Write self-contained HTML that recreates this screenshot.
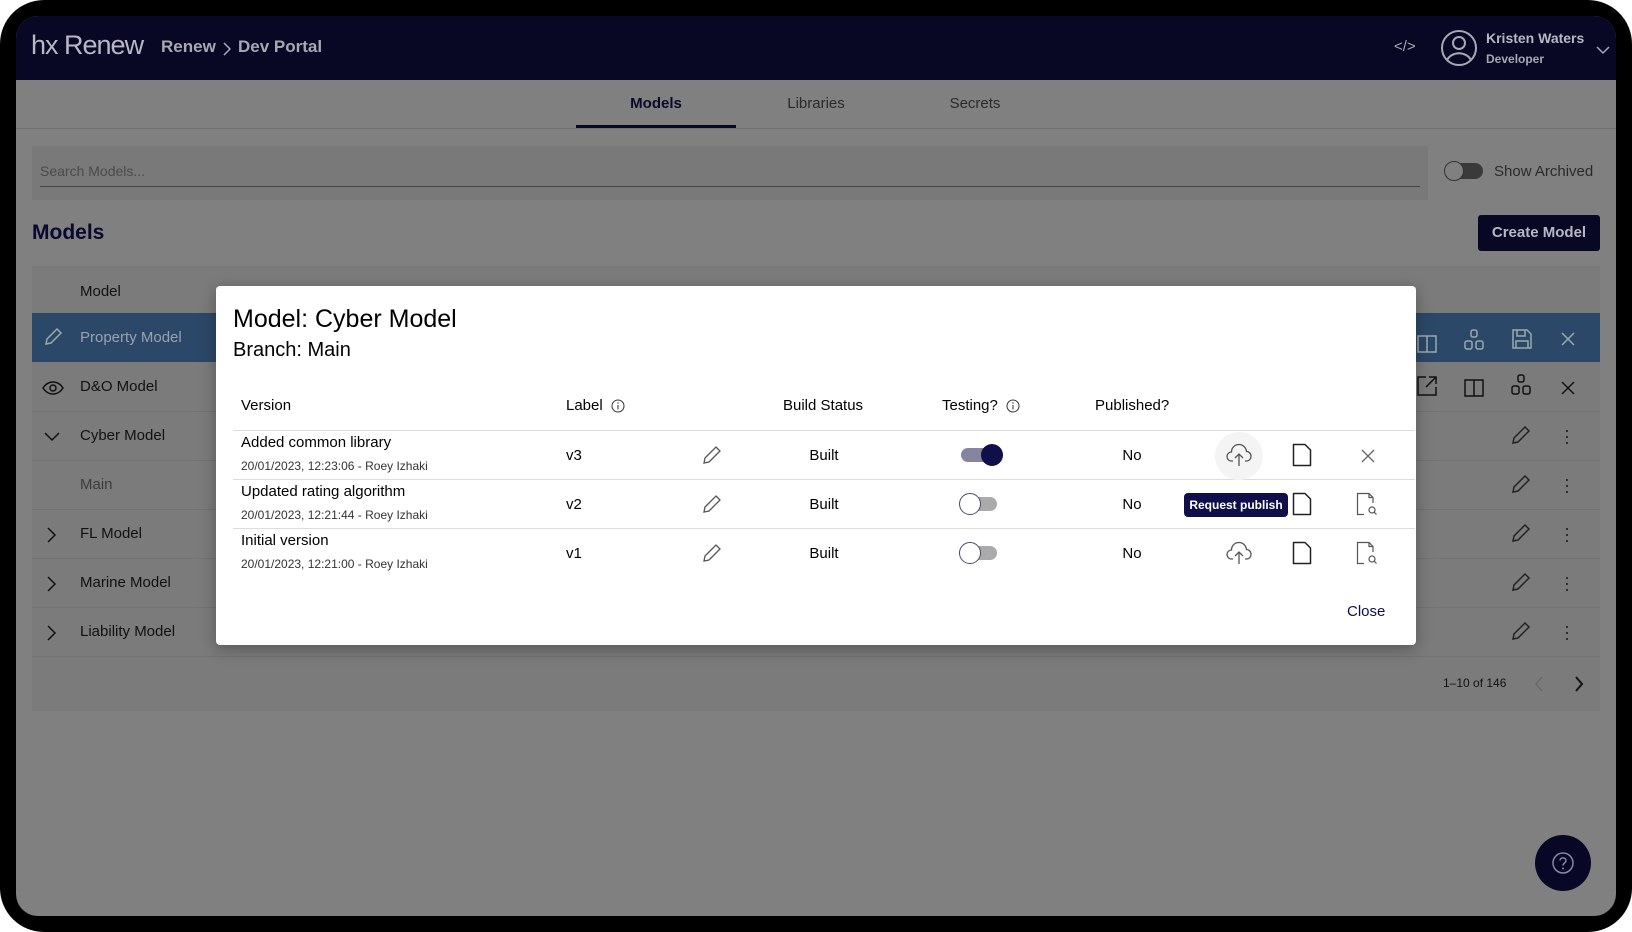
<!DOCTYPE html>
<html><head><meta charset="utf-8"><style>
*{margin:0;padding:0;box-sizing:border-box}
body{width:1632px;height:932px;background:#fff;font-family:"Liberation Sans",sans-serif;position:relative;overflow:hidden}
.a{position:absolute}
.frame{left:0;top:0;width:1632px;height:932px;background:#000;border-radius:44px}
.screen{left:16px;top:16px;width:1600px;height:900px;background:#808080;border-radius:22px;overflow:hidden}
.t{position:absolute;white-space:nowrap}
svg{position:absolute;overflow:visible}
.bt{color:#111;font-size:15px}
.rowline{position:absolute;left:16px;width:1568px;height:1px;background:#737373}
.mt{color:#000}
</style></head><body>
<div class="a frame"></div>
<div class="a screen">
 <div class="a" style="left:0;top:0;width:1600px;height:64px;background:#080824"></div>
 <div class="t" style="left:15px;top:14px;font-size:27px;color:#b8b8c4;letter-spacing:-1px">hx Renew</div>
 <div class="t" style="left:145px;top:21px;font-size:17px;color:#a8a8b4;font-weight:bold">Renew</div>
 <svg style="left:206px;top:25px" width="10" height="16"><path d="M2 2 L8 8 L2 14" stroke="#a8a8b4" stroke-width="1.5" fill="none"/></svg>
 <div class="t" style="left:222px;top:21px;font-size:17px;color:#a8a8b4;font-weight:bold">Dev Portal</div>
 <div class="t" style="left:1378px;top:22px;font-size:15px;color:#a8a8b4">&lt;/&gt;</div>
 <svg style="left:1424px;top:13px" width="38" height="38"><circle cx="19" cy="19" r="17" stroke="#a8a8b4" stroke-width="2" fill="none"/><circle cx="19" cy="14" r="6" stroke="#a8a8b4" stroke-width="2" fill="none"/><path d="M7 31 C12 22 26 22 31 31" stroke="#a8a8b4" stroke-width="2" fill="none"/></svg>
 <div class="t" style="left:1470px;top:14px;font-size:14px;color:#b8b8c4;font-weight:bold">Kristen Waters</div>
 <div class="t" style="left:1470px;top:36px;font-size:12px;color:#a8a8b4;font-weight:bold">Developer</div>
 <svg style="left:1580px;top:30px" width="14" height="9"><path d="M1 1 L7 7 L13 1" stroke="#a8a8b4" stroke-width="1.5" fill="none"/></svg>
 <div class="t" style="left:560px;top:79px;width:160px;text-align:center;font-size:15px;color:#0a0a2a;font-weight:bold">Models</div>
 <div class="t" style="left:720px;top:79px;width:160px;text-align:center;font-size:15px;color:#2a2a2a">Libraries</div>
 <div class="t" style="left:879px;top:79px;width:160px;text-align:center;font-size:15px;color:#2a2a2a">Secrets</div>
 <div class="a" style="left:0;top:112px;width:1600px;height:1px;background:#707070"></div>
 <div class="a" style="left:560px;top:109px;width:160px;height:3px;background:#080824"></div>
 <div class="a" style="left:16px;top:130px;width:1396px;height:54px;background:#797979"></div>
 <div class="t" style="left:24px;top:147px;font-size:14px;color:#4a4a4a">Search Models...</div>
 <div class="a" style="left:24px;top:170px;width:1380px;height:1px;background:#444"></div>
 <div class="a" style="left:1429px;top:147px;width:38px;height:16px;border-radius:8px;background:#3a3a3a"></div>
 <div class="a" style="left:1428px;top:145px;width:20px;height:20px;border-radius:10px;background:#808080;border:1px solid #333"></div>
 <div class="t" style="left:1478px;top:147px;font-size:15px;color:#2a2a2a">Show Archived</div>
 <div class="t" style="left:16px;top:205px;font-size:21px;color:#080830;font-weight:bold">Models</div>
 <div class="a" style="left:1462px;top:199px;width:122px;height:36px;background:#080824;border-radius:3px"></div>
 <div class="t" style="left:1462px;top:208px;width:122px;text-align:center;font-size:15px;color:#b8b8c4;font-weight:bold">Create Model</div>
 <div class="a" style="left:16px;top:250px;width:1568px;height:445px;background:#7b7b7b"></div>
 <div class="t bt" style="left:64px;top:267px">Model</div>
 <div class="a" style="left:16px;top:297px;width:1568px;height:49px;background:#2c4868"></div>
 <svg style="left:26px;top:310px" width="22" height="22"><path d="M4 18 L5 13 L15 3 L19 7 L9 17 Z" stroke="#9aa" stroke-width="1.5" fill="none"/></svg>
 <div class="t" style="left:64px;top:313px;font-size:15px;color:#9aa2ad">Property Model</div>
 <div class="t bt" style="left:64px;top:362px">D&amp;O Model</div>
 <svg style="left:26px;top:364px" width="22" height="16"><path d="M1 8 C6 0 16 0 21 8 C16 16 6 16 1 8Z" stroke="#111" stroke-width="1.5" fill="none"/><circle cx="11" cy="8" r="3" stroke="#111" stroke-width="1.5" fill="none"/></svg>
 <div class="rowline" style="top:395px"></div>
 <svg style="left:28px;top:416px" width="16" height="10"><path d="M1 1 L8 8 L15 1" stroke="#111" stroke-width="1.5" fill="none"/></svg>
 <div class="t bt" style="left:64px;top:411px">Cyber Model</div>
 <div class="rowline" style="top:444px"></div>
 <div class="t" style="left:64px;top:460px;font-size:15px;color:#3c3c3c">Main</div>
 <div class="rowline" style="top:493px"></div>
 <svg style="left:31px;top:511px" width="10" height="16"><path d="M1 1 L8 8 L1 15" stroke="#111" stroke-width="1.5" fill="none"/></svg>
 <div class="t bt" style="left:64px;top:509px">FL Model</div>
 <div class="rowline" style="top:542px"></div>
 <svg style="left:31px;top:560px" width="10" height="16"><path d="M1 1 L8 8 L1 15" stroke="#111" stroke-width="1.5" fill="none"/></svg>
 <div class="t bt" style="left:64px;top:558px">Marine Model</div>
 <div class="rowline" style="top:591px"></div>
 <svg style="left:31px;top:609px" width="10" height="16"><path d="M1 1 L8 8 L1 15" stroke="#111" stroke-width="1.5" fill="none"/></svg>
 <div class="t bt" style="left:64px;top:607px">Liability Model</div>
 <div class="rowline" style="top:640px"></div>
 <svg style="left:1400px;top:318px" width="24" height="20"><path d="M2 2 H11 V18 H2Z M11 2 H20 V18 H11" stroke="#9aa" stroke-width="1.5" fill="none"/></svg>
 <svg style="left:1447px;top:312px" width="24" height="24"><rect x="8" y="2" width="6" height="7" rx="2" stroke="#9aa" stroke-width="1.5" fill="none"/><rect x="2" y="13" width="7" height="8" rx="2" stroke="#9aa" stroke-width="1.5" fill="none"/><rect x="13" y="13" width="7" height="8" rx="2" stroke="#9aa" stroke-width="1.5" fill="none"/></svg>
 <svg style="left:1495px;top:312px" width="22" height="22"><path d="M2 2 H16 L20 6 V20 H2Z M6 2 V8 H14 V2 M5 20 V13 H17 V20" stroke="#9aa" stroke-width="1.5" fill="none"/></svg>
 <svg style="left:1545px;top:316px" width="14" height="14"><path d="M1 1 L13 13 M13 1 L1 13" stroke="#9aa" stroke-width="1.5"/></svg>
 <svg style="left:1400px;top:359px" width="22" height="22"><path d="M10 2 H2 V20 H20 V12 M13 2 H20 V9 M20 2 L10 12" stroke="#111" stroke-width="1.5" fill="none"/></svg>
 <svg style="left:1447px;top:362px" width="24" height="20"><path d="M2 2 H11 V18 H2Z M11 2 H20 V18 H11" stroke="#111" stroke-width="1.5" fill="none"/></svg>
 <svg style="left:1494px;top:357px" width="24" height="24"><rect x="8" y="2" width="6" height="7" rx="2" stroke="#111" stroke-width="1.5" fill="none"/><rect x="2" y="13" width="7" height="8" rx="2" stroke="#111" stroke-width="1.5" fill="none"/><rect x="13" y="13" width="7" height="8" rx="2" stroke="#111" stroke-width="1.5" fill="none"/></svg>
 <svg style="left:1545px;top:365px" width="14" height="14"><path d="M1 1 L13 13 M13 1 L1 13" stroke="#111" stroke-width="1.5"/></svg>
 <svg style="left:1494px;top:408px" width="22" height="22"><path d="M3 19 L4 14 L15 3 L19 7 L8 18 Z" stroke="#222" stroke-width="1.5" fill="none"/></svg>
 <div class="t" style="left:1548px;top:411px;font-size:18px;color:#222;line-height:6px;width:4px">·<br>·<br>·</div>
 <svg style="left:1494px;top:457px" width="22" height="22"><path d="M3 19 L4 14 L15 3 L19 7 L8 18 Z" stroke="#222" stroke-width="1.5" fill="none"/></svg>
 <div class="t" style="left:1548px;top:460px;font-size:18px;color:#222;line-height:6px">·<br>·<br>·</div>
 <svg style="left:1494px;top:506px" width="22" height="22"><path d="M3 19 L4 14 L15 3 L19 7 L8 18 Z" stroke="#222" stroke-width="1.5" fill="none"/></svg>
 <div class="t" style="left:1548px;top:509px;font-size:18px;color:#222;line-height:6px">·<br>·<br>·</div>
 <svg style="left:1494px;top:555px" width="22" height="22"><path d="M3 19 L4 14 L15 3 L19 7 L8 18 Z" stroke="#222" stroke-width="1.5" fill="none"/></svg>
 <div class="t" style="left:1548px;top:558px;font-size:18px;color:#222;line-height:6px">·<br>·<br>·</div>
 <svg style="left:1494px;top:604px" width="22" height="22"><path d="M3 19 L4 14 L15 3 L19 7 L8 18 Z" stroke="#222" stroke-width="1.5" fill="none"/></svg>
 <div class="t" style="left:1548px;top:607px;font-size:18px;color:#222;line-height:6px">·<br>·<br>·</div>
 <div class="t" style="left:1427px;top:660px;font-size:12px;color:#111">1–10 of 146</div>
 <svg style="left:1518px;top:660px" width="10" height="16"><path d="M8 1 L2 8 L8 15" stroke="#6a6a6a" stroke-width="1.5" fill="none"/></svg>
 <svg style="left:1558px;top:660px" width="10" height="16"><path d="M2 1 L8 8 L2 15" stroke="#111" stroke-width="2" fill="none"/></svg>
 <div class="a" style="left:1519px;top:819px;width:56px;height:56px;border-radius:28px;background:#080826"></div>
 <svg style="left:1535px;top:835px" width="24" height="24"><circle cx="12" cy="12" r="10" stroke="#8888a0" stroke-width="1.5" fill="none"/><path d="M9 9.5 C9 6 15 6 15 9.5 C15 12 12 12 12 14.5" stroke="#8888a0" stroke-width="1.5" fill="none"/><circle cx="12" cy="17.5" r="1" fill="#8888a0"/></svg>

 <div class="a" style="left:200px;top:270px;width:1200px;height:359px;background:#fff;border-radius:4px;box-shadow:0 4px 16px rgba(0,0,0,.3)"></div>
 <div class="t mt" style="left:217px;top:289px;font-size:25px">Model: Cyber Model</div>
 <div class="t mt" style="left:217px;top:323px;font-size:20px">Branch: Main</div>
 <div class="t mt" style="left:225px;top:381px;font-size:15px">Version</div>
 <div class="t mt" style="left:550px;top:381px;font-size:15px">Label</div>
 <svg style="left:595px;top:383px" width="14" height="14"><circle cx="7" cy="7" r="6" stroke="#333" stroke-width="1" fill="none"/><path d="M7 6 V10.5" stroke="#333"/><circle cx="7" cy="4" r=".7" fill="#333"/></svg>
 <div class="t mt" style="left:767px;top:381px;font-size:15px">Build Status</div>
 <div class="t mt" style="left:926px;top:381px;font-size:15px">Testing?</div>
 <svg style="left:990px;top:383px" width="14" height="14"><circle cx="7" cy="7" r="6" stroke="#333" stroke-width="1" fill="none"/><path d="M7 6 V10.5" stroke="#333"/><circle cx="7" cy="4" r=".7" fill="#333"/></svg>
 <div class="t mt" style="left:1079px;top:381px;font-size:15px">Published?</div>
 <div class="a" style="left:217px;top:414px;width:1182px;height:1px;background:#ddd"></div>
 <div class="a" style="left:217px;top:463px;width:1182px;height:1px;background:#ddd"></div>
 <div class="a" style="left:217px;top:512px;width:1182px;height:1px;background:#ddd"></div>

 <div class="t mt" style="left:225px;top:418px;font-size:15px">Added common library</div>
 <div class="t" style="left:225px;top:443px;font-size:12px;color:#333">20/01/2023, 12:23:06 - Roey Izhaki</div>
 <div class="t mt" style="left:550px;top:431px;font-size:15px">v3</div>
 <div class="t mt" style="left:784px;top:431px;font-size:15px;width:48px;text-align:center">Built</div>
 <div class="t mt" style="left:1098px;top:431px;font-size:15px;width:36px;text-align:center">No</div>
 <div class="t mt" style="left:225px;top:467px;font-size:15px">Updated rating algorithm</div>
 <div class="t" style="left:225px;top:492px;font-size:12px;color:#333">20/01/2023, 12:21:44 - Roey Izhaki</div>
 <div class="t mt" style="left:550px;top:480px;font-size:15px">v2</div>
 <div class="t mt" style="left:784px;top:480px;font-size:15px;width:48px;text-align:center">Built</div>
 <div class="t mt" style="left:1098px;top:480px;font-size:15px;width:36px;text-align:center">No</div>
 <div class="t mt" style="left:225px;top:516px;font-size:15px">Initial version</div>
 <div class="t" style="left:225px;top:541px;font-size:12px;color:#333">20/01/2023, 12:21:00 - Roey Izhaki</div>
 <div class="t mt" style="left:550px;top:529px;font-size:15px">v1</div>
 <div class="t mt" style="left:784px;top:529px;font-size:15px;width:48px;text-align:center">Built</div>
 <div class="t mt" style="left:1098px;top:529px;font-size:15px;width:36px;text-align:center">No</div>

 <svg style="left:685px;top:428px" width="22" height="22"><path d="M3 19 L4 14 L15 3 L19 7 L8 18 Z" stroke="#555" stroke-width="1.3" fill="none"/></svg>
 <svg style="left:685px;top:477px" width="22" height="22"><path d="M3 19 L4 14 L15 3 L19 7 L8 18 Z" stroke="#555" stroke-width="1.3" fill="none"/></svg>
 <svg style="left:685px;top:526px" width="22" height="22"><path d="M3 19 L4 14 L15 3 L19 7 L8 18 Z" stroke="#555" stroke-width="1.3" fill="none"/></svg>
 <div class="a" style="left:945px;top:432px;width:36px;height:14px;border-radius:7px;background:#8585a0"></div>
 <div class="a" style="left:965px;top:428px;width:22px;height:22px;border-radius:11px;background:#0f0f4a"></div>
 <div class="a" style="left:945px;top:481px;width:36px;height:14px;border-radius:7px;background:#aaa"></div>
 <div class="a" style="left:943px;top:477px;width:22px;height:22px;border-radius:11px;background:#fff;border:1px solid #4a4a6a"></div>
 <div class="a" style="left:945px;top:530px;width:36px;height:14px;border-radius:7px;background:#aaa"></div>
 <div class="a" style="left:943px;top:526px;width:22px;height:22px;border-radius:11px;background:#fff;border:1px solid #4a4a6a"></div>
 <div class="a" style="left:1199px;top:416px;width:48px;height:48px;border-radius:24px;background:#f4f4f4"></div>
 <svg style="left:1210px;top:426px" width="26" height="26"><path d="M7 19 H5.5 C2.5 19 1 16.5 1 14.5 C1 12 3 10 5.5 10 C5.5 5.5 9 2.5 13 2.5 C17 2.5 20 5.5 20.5 9.5 C23 9.5 25 11.5 25 14.5 C25 17 23 19 20.5 19 H19 M13 24 V12 M9 16 L13 12 L17 16" stroke="#555" stroke-width="1.3" fill="none"/></svg>
 <svg style="left:1210px;top:524px" width="26" height="26"><path d="M7 19 H5.5 C2.5 19 1 16.5 1 14.5 C1 12 3 10 5.5 10 C5.5 5.5 9 2.5 13 2.5 C17 2.5 20 5.5 20.5 9.5 C23 9.5 25 11.5 25 14.5 C25 17 23 19 20.5 19 H19 M13 24 V12 M9 16 L13 12 L17 16" stroke="#555" stroke-width="1.3" fill="none"/></svg>
 <div class="a" style="left:1168px;top:477px;width:104px;height:24px;border-radius:4px;background:#0f0f4a"></div>
 <div class="t" style="left:1168px;top:482px;width:104px;text-align:center;font-size:12px;color:#fff;font-weight:bold">Request publish</div>
 <svg style="left:1276px;top:427px" width="20" height="24"><path d="M1.5 1.5 H13 L18.5 7 V22.5 H1.5Z" stroke="#222" stroke-width="1.5" fill="none" stroke-linejoin="round"/></svg>
 <svg style="left:1276px;top:476px" width="20" height="24"><path d="M1.5 1.5 H13 L18.5 7 V22.5 H1.5Z" stroke="#222" stroke-width="1.5" fill="none" stroke-linejoin="round"/></svg>
 <svg style="left:1276px;top:525px" width="20" height="24"><path d="M1.5 1.5 H13 L18.5 7 V22.5 H1.5Z" stroke="#222" stroke-width="1.5" fill="none" stroke-linejoin="round"/></svg>
 <svg style="left:1345px;top:433px" width="14" height="14"><path d="M1 1 L13 13 M13 1 L1 13" stroke="#666" stroke-width="1.3"/></svg>
 <svg style="left:1340px;top:476px" width="22" height="24"><path d="M8 22.5 H1.5 V1.5 H13 L17 5.5 V11 M13 1.5 V5.5 H17" stroke="#555" stroke-width="1.2" fill="none"/><circle cx="16" cy="18" r="3" stroke="#555" stroke-width="1.2" fill="none"/><path d="M18 20 L20.5 22.5" stroke="#555" stroke-width="1.2"/></svg>
 <svg style="left:1340px;top:525px" width="22" height="24"><path d="M8 22.5 H1.5 V1.5 H13 L17 5.5 V11 M13 1.5 V5.5 H17" stroke="#555" stroke-width="1.2" fill="none"/><circle cx="16" cy="18" r="3" stroke="#555" stroke-width="1.2" fill="none"/><path d="M18 20 L20.5 22.5" stroke="#555" stroke-width="1.2"/></svg>
 <div class="t" style="left:1331px;top:587px;font-size:15px;color:#0f0f4a">Close</div>
</div>
</body></html>
